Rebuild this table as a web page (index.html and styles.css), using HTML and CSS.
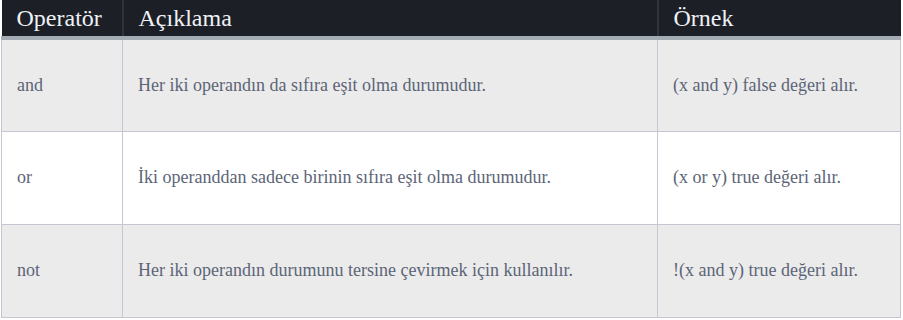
FILE: index.html
```html
<!DOCTYPE html>
<html lang="tr">
<head>
    <meta charset="UTF-8">
    <meta name="viewport" content="width=device-width, initial-scale=1.0">
    <title>Mantıksal Operatörler</title>
    <link rel="stylesheet" href="styles.css">
</head>
<body>

    <!-- Logical operators table -->
    <table class="op-table">
        <thead>
            <tr>
                <th class="col-op">Operatör</th>
                <th class="col-desc">Açıklama</th>
                <th class="col-ex">Örnek</th>
            </tr>
        </thead>
        <tbody>
            <tr>
                <td>and</td>
                <td>Her iki operandın da sıfıra eşit olma durumudur.</td>
                <td>(x and y) false değeri alır.</td>
            </tr>
            <tr>
                <td>or</td>
                <td>İki operanddan sadece birinin sıfıra eşit olma durumudur.</td>
                <td>(x or y) true değeri alır.</td>
            </tr>
            <tr>
                <td>not</td>
                <td>Her iki operandın durumunu tersine çevirmek için kullanılır.</td>
                <td>!(x and y) true değeri alır.</td>
            </tr>
        </tbody>
    </table>

</body>
</html>
```

FILE: styles.css
```css
body {
    margin: 0;
    padding: 0 2px 0 1px;
    background: #fff;
}
.op-table {
    width: 100%;
    border-collapse: collapse;
    table-layout: fixed;
    font-family: "Liberation Serif", "Times New Roman", serif;
}
.col-op {
    width: 121px;
}
.col-ex {
    width: 243px;
}
th, td {
    box-sizing: border-box;
}
th {
    background-color: #1c1f26;
    color: #eef2f7;
    font-size: 24px;
    font-weight: normal;
    text-align: left;
    height: 38px;
    padding: 0 15px;
    line-height: 27px;
    border-left: 2px solid #2f333a;
    border-bottom: 4px solid #a3abb3;
}
th:first-child {
    border-left: none;
}
td {
    font-size: 18px;
    color: #5c6577;
    padding: 0 15px;
    height: 93px;
    border: 1px solid #c6c5d4;
    border-top: none;
}
tbody tr:nth-child(odd) td {
    background-color: #ebebeb;
}
tbody tr:nth-child(even) td {
    background-color: #fff;
}
```
